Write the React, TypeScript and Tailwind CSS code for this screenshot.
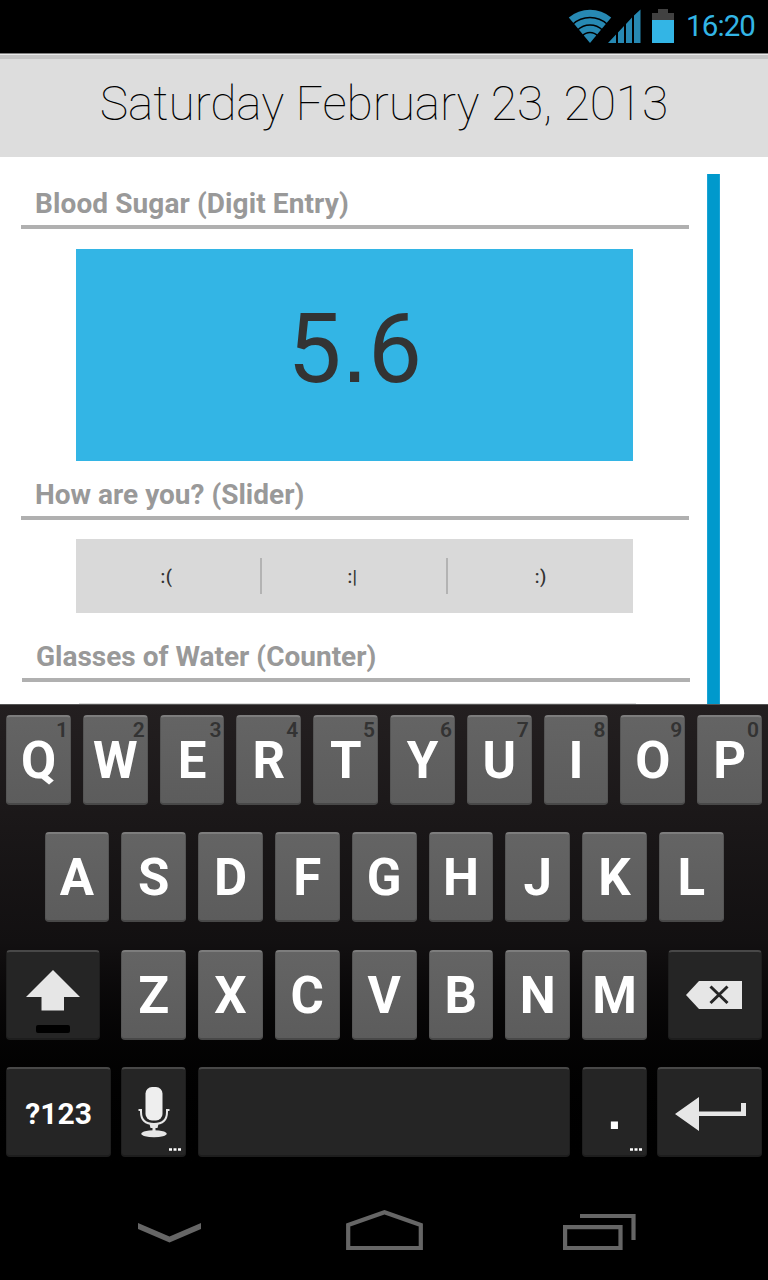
import type { ReactNode } from "react";

type KeyProps = {
  children?: ReactNode;
  label?: string;
  hint?: string;
  dark?: boolean;
  className?: string;
};

function Key({ children, label, hint, dark = false, className = "w-[64.8px]" }: KeyProps) {
  const tone = dark
    ? "bg-[#252525] border-t-[#484848] border-x-[#1e1e1e] border-b-[#1d1d1d]"
    : "bg-linear-to-b from-[#646464] to-[#5c5c5c] border-t-[#7d7d7d] border-x-[#555555] border-b-[#484848]";
  return (
    <button
      aria-label={label}
      className={`relative flex h-[90px] shrink-0 items-center justify-center rounded-[4px] border-x border-t-2 border-b-2 text-white ${tone} ${className}`}
    >
      {hint && (
        <span className="absolute right-[2px] top-[1px] text-[21px] leading-[24px] font-semibold text-[#333333]">
          {hint}
        </span>
      )}
      {children}
    </button>
  );
}

function Letter({ char, hint }: { char: string; hint?: string }) {
  return (
    <Key hint={hint}>
      <span className="mt-[2px] text-[51px] leading-[60px] font-bold">{char}</span>
    </Key>
  );
}

function Section({ title, className }: { title: string; className: string }) {
  return (
    <h2
      className={`w-[668px] shrink-0 border-b-4 border-[#b0b0b0] pl-[14px] text-[28px] leading-[34px] font-bold whitespace-nowrap text-[#999999] ${className}`}
    >
      {title}
    </h2>
  );
}

function Dots() {
  return (
    <svg className="absolute right-[4px] bottom-[4px]" width="12" height="3" viewBox="0 0 12 3">
      <path fill="#fff" d="M0 0.3h3v2.4H0zM4.5 0.3h3v2.4h-3zM9 0.3h3v2.4H9z" />
    </svg>
  );
}

function StatusBar() {
  return (
    <header className="flex h-[53px] items-start justify-end bg-black pr-[13px] text-[#33b5e5]">
      <svg className="mt-[9px]" width="44" height="34" viewBox="0 0 44 34">
        <path fill="#2789b3" d="M0.800 8.500A33.100 33.100 0 0 1 43.200 8.500L22 34Z" />
        <g fill="none" stroke="#000" strokeWidth="1.500">
          <path d="M4.700 15.300A25.500 25.500 0 0 1 39.300 15.300" />
          <path d="M9.500 21A18 18 0 0 1 34.500 21" />
          <path d="M14.300 26.800A10.500 10.500 0 0 1 29.700 26.800" />
        </g>
      </svg>
      <svg className="mt-[9px] -ml-1" width="33" height="34" viewBox="0 0 33 34">
        <path
          fill="#2789b3"
          d="M0 34L8 25.5V34ZM10 34V23.5L16 17V34ZM18 34V15L24 8.5V34ZM26 34V6.5L32.5 0.5V34Z"
        />
      </svg>
      <svg className="mt-[9px] ml-[11px]" width="22" height="34" viewBox="0 0 22 34">
        <path fill="#414141" d="M0 4H6V0H16V4H22V12H0Z" />
        <path fill="#33b5e5" d="M0 11H22V34H0Z" />
      </svg>
      <span className="mt-[8px] ml-[10px] w-[71px] text-right text-[29.500px] leading-[36px] tracking-[-0.9px] whitespace-nowrap">
        16:20
      </span>
    </header>
  );
}

function Keyboard() {
  const hints = "1234567890";
  return (
    <section className="flex h-[476px] flex-col gap-[27.400px] border-t border-[#555] bg-linear-to-b from-[#231f20] via-[#121011] to-black pt-[10px] pr-[5.900px] pl-[6.100px]">
      <div className="flex gap-3">
        {"QWERTYUIOP".split("").map((c, i) => (
          <Letter key={c} char={c} hint={hints[i]} />
        ))}
      </div>
      <div className="flex justify-center gap-3">
        {"ASDFGHJKL".split("").map((c) => (
          <Letter key={c} char={c} />
        ))}
      </div>
      <div className="flex justify-between">
        <Key dark label="Shift" className="w-[94.4px]">
          <svg width="54" height="63" viewBox="0 0 54 63" className="mt-[13px]">
            <path fill="#e6e6e6" d="M27 0L54 27H38V40.500H15.500V27H0Z" />
            <rect x="10" y="55" width="34" height="8" rx="2" fill="#000" />
          </svg>
        </Key>
        <div className="flex gap-3">
          {"ZXCVBNM".split("").map((c) => (
            <Letter key={c} char={c} />
          ))}
        </div>
        <Key dark label="Delete" className="w-[94.4px]">
          <svg width="56" height="28" viewBox="0 0 56 28" className="-ml-[2px]">
            <path fill="#e6e6e6" d="M0 14L13 0H56V28H13Z" />
            <path stroke="#252525" strokeWidth="3" d="M24.500 5.500L41.500 22M41.500 5.500L24.500 22" />
          </svg>
        </Key>
      </div>
      <div className="flex">
        <Key dark className="w-[105px]">
          <span className="mt-[4px] text-[30px] leading-[36px] font-bold">?123</span>
        </Key>
        <Key dark label="Voice input" className="ml-[10.2px] w-[64.8px]">
          <svg width="32" height="51" viewBox="0 0 32 51">
            <rect x="7.500" y="0" width="17" height="33.500" rx="6.500" fill="#eeeeee" />
            <path
              fill="none"
              stroke="#e6e6e6"
              strokeWidth="2"
              d="M0.500 23H3V25C3 33 8 37 16 37S29 33 29 25V23H31.500"
            />
            <path fill="#e6e6e6" d="M11.500 37H20.500L19.500 41H17.500V44H14.500V41H12.500Z" />
            <ellipse cx="16" cy="46.800" rx="12.700" ry="3.500" fill="#e6e6e6" />
          </svg>
          <Dots />
        </Key>
        <Key dark label="Space" className="ml-3 w-[372px]" />
        <Key dark className="ml-3 w-[64.8px]">
          <span className="font-['Liberation_Sans',sans-serif] text-[50px] leading-[60px] font-bold">.</span>
          <Dots />
        </Key>
        <Key dark label="Enter" className="ml-[10.2px] w-[105px]">
          <svg width="71" height="34" viewBox="0 0 71 34" className="mt-[4px] ml-[2px]">
            <path fill="#e6e6e6" d="M0 17L24 0V14.500H66V6H71V19H24V34Z" />
          </svg>
        </Key>
      </div>
    </section>
  );
}

export default function App() {
  return (
    <div className="flex h-[1280px] w-[768px] flex-col overflow-hidden bg-black font-['Roboto',sans-serif]">
      <StatusBar />
      <div className="h-[104px] border-t border-[#808080] bg-[#dddddd]">
        <div className="h-[5px] border-t border-[#eaeaea] bg-[#c5c5c5]" />
        <h1 className="pt-[16px] text-center text-[48px] leading-[58px] font-thin tracking-[-0.08px] whitespace-nowrap text-black">
          Saturday February 23, 2013
        </h1>
      </div>
      <main className="flex h-[547px] overflow-hidden bg-white">
        <div className="flex w-[707px] flex-col pl-[21px]">
          <Section title="Blood Sugar (Digit Entry)" className="mt-[30px] h-[42px] tracking-[0.1px]" />
          <div className="mt-[20px] ml-[55px] flex h-[212px] w-[557.400px] shrink-0 items-center justify-center bg-[#33b5e5] pb-[13px]">
            <span className="text-[96px] leading-[112px] text-[#333333]">
              5<span className="font-['Liberation_Sans',sans-serif]">.</span>6
            </span>
          </div>
          <Section title="How are you? (Slider)" className="mt-[17px] h-[42px]" />
          <div className="mt-[19px] ml-[55px] flex h-[74px] w-[557.400px] shrink-0 items-center bg-[#d9d9d9] text-[18px] font-medium text-[#333333]">
            <span className="w-[184px] pr-[3px] text-center tracking-[0.5px]">:(</span>
            <span className="h-[36px] w-[2px] bg-[#b3b3b3]" />
            <span className="w-[184px] pr-[3px] text-center tracking-[0.5px]">:|</span>
            <span className="h-[36px] w-[2px] bg-[#b3b3b3]" />
            <span className="flex-1 text-center tracking-[0.5px]">:)</span>
          </div>
          <Section title="Glasses of Water (Counter)" className="mt-[27px] ml-px h-[42px]" />
          <div className="mt-[21px] ml-[58px] h-[1px] w-[557.400px] shrink-0 bg-[#d9d9d9]" />
        </div>
        <div className="mt-[17px] w-[13px] border-x border-[#1aa3d5] bg-[#0099cc]" />
      </main>
      <Keyboard />
      <nav className="flex flex-1 items-start justify-between pr-[132px] pl-[138px] pt-[30px]">
        <svg width="63" height="42" viewBox="0 0 63 42">
          <path fill="#666" d="M0 13L31.500 26.500L63 13V19L31.500 32.500L0 19Z" />
        </svg>
        <svg width="77" height="42" viewBox="0 0 77 42" className="ml-[4px]">
          <path fill="none" stroke="#666" strokeWidth="4.200" d="M2.200 38V15L38.500 2.200L74.800 15V38Z" />
        </svg>
        <svg width="73" height="42" viewBox="0 0 73 42">
          <path fill="none" stroke="#666" strokeWidth="4.200" d="M2.100 17.100H57.500V38H2.100ZM17 6H70.500V30" />
        </svg>
      </nav>
    </div>
  );
}
